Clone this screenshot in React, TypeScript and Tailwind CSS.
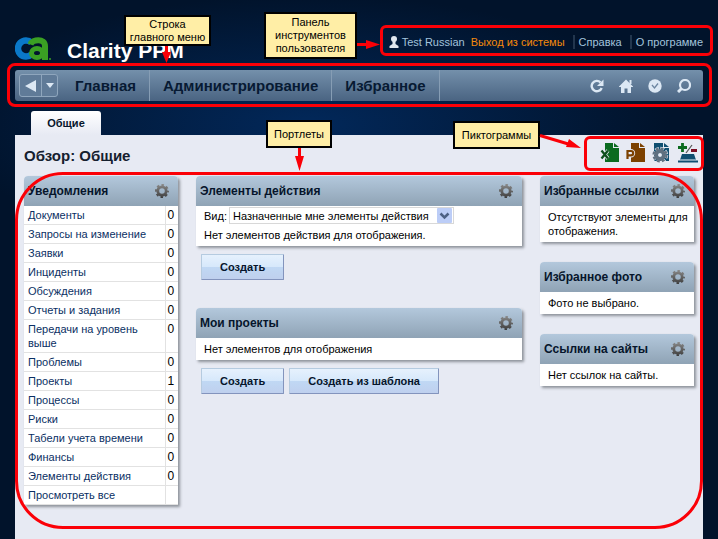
import React from 'react'
import type { ReactNode } from 'react'

const notices = [
  { label: 'Документы', count: '0' },
  { label: 'Запросы на изменение', count: '0' },
  { label: 'Заявки', count: '0' },
  { label: 'Инциденты', count: '0' },
  { label: 'Обсуждения', count: '0' },
  { label: 'Отчеты и задания', count: '0' },
  { label: 'Передачи на уровень выше', count: '0' },
  { label: 'Проблемы', count: '0' },
  { label: 'Проекты', count: '1' },
  { label: 'Процессы', count: '0' },
  { label: 'Риски', count: '0' },
  { label: 'Табели учета времени', count: '0' },
  { label: 'Финансы', count: '0' },
  { label: 'Элементы действия', count: '0' },
  { label: 'Просмотреть все', count: '' },
]

const menu = ['Главная', 'Администрирование', 'Избранное']

const Logo = () => (
  <svg width="38" height="24" viewBox="0 0 38 24" fill="none" role="img" aria-label="CA">
    <path d="M16.500 5.700A8 8 0 1016.500 17.300" stroke="#0a78c8" strokeWidth="6.500" />
    <ellipse cx="22" cy="16" rx="5.500" ry="4.500" stroke="#3aa023" strokeWidth="5" />
    <path d="M15.500 7.500C17.500 2 30 1 30 9v14" stroke="#3aa023" strokeWidth="6" />
    <circle cx="35" cy="22" r="1" fill="#3aa023" />
  </svg>
)

const Gear = () => (
  <svg width="14" height="14" viewBox="0 0 14 14" fill="none">
    <defs>
      <linearGradient id="gear" gradientUnits="userSpaceOnUse" x1="0" y1="0" x2="0" y2="14">
        <stop offset="0" stopColor="#8a8a8a" />
        <stop offset="1" stopColor="#3c3c3c" />
      </linearGradient>
    </defs>
    <circle cx="7" cy="7" r="4.2" stroke="url(#gear)" strokeWidth="2.8" />
    <circle cx="7" cy="7" r="6" stroke="url(#gear)" strokeWidth="2" strokeDasharray="2.5 2.212" strokeDashoffset="1.25" />
  </svg>
)

const ExcelIcon = () => (
  <svg width="20" height="20" viewBox="0 0 20 20" fill="none">
    <path d="M5 0h8v5h6v14H5z" fill="#0b6b1f" />
    <path d="M14 0l5 4h-5z" fill="#0b6b1f" />
    <path d="M1.500 7.500l6.500 8M8 7.500l-6.500 8" stroke="#e7eaf3" strokeWidth="3.600" />
    <path d="M1.500 7.500l6.500 8M8 7.500l-6.500 8" stroke="#0d4f1c" strokeWidth="2.300" />
  </svg>
)

const PowerPointIcon = () => (
  <svg width="20" height="20" viewBox="0 0 20 20" fill="none">
    <path d="M5 0h8v5h6v14H5z" fill="#7c4100" />
    <path d="M14 0l5 4h-5z" fill="#7c4100" />
    <path d="M1.500 16.500V8h3.500a2.200 2.200 0 010 4.400H1.500" stroke="#e7eaf3" strokeWidth="4" />
    <path d="M1.500 16V8h3.500a2.200 2.200 0 010 4.400H1.500" stroke="#7c4100" strokeWidth="2.200" />
  </svg>
)

const ConfigureIcon = () => (
  <svg width="20" height="20" viewBox="0 0 20 20" fill="none">
    <path d="M2 0h9v5h6v13H2z" fill="#0f4e70" />
    <path d="M12 0l5 4h-5z" fill="#0f4e70" />
    <circle cx="8" cy="12" r="6.500" stroke="#e7eaf3" strokeWidth="3.400" strokeDasharray="3.600 1.505" strokeDashoffset="0.400" />
    <circle cx="8" cy="12" r="4" stroke="#5f7080" strokeWidth="3.800" />
    <circle cx="8" cy="12" r="6.500" stroke="#5f7080" strokeWidth="2.200" strokeDasharray="2.800 2.305" />
    <circle cx="8" cy="12" r="2" fill="#e7eaf3" />
  </svg>
)

const PersonalizeIcon = () => (
  <svg width="20" height="20" viewBox="0 0 20 20" fill="none">
    <path d="M4.500 0v9M0 4.500h9" stroke="#0b6b1f" strokeWidth="2.800" />
    <path d="M8 10l6-8" stroke="#555" strokeWidth="1.200" />
    <path d="M13 7.500h6" stroke="#7c0d22" strokeWidth="3" />
    <path d="M4 11h12l2 6H2z" fill="#0f4e70" />
    <path d="M0 18.500h20" stroke="#0f4e70" strokeWidth="2" />
    <path d="M2 16.500h16" stroke="#7fa3b8" strokeWidth="1" />
  </svg>
)

const Callout = ({ className, children }: { className: string; children: ReactNode }) => (
  <div
    className={`absolute z-20 flex items-center justify-center border-2 border-black bg-[#ffeea6] text-center text-[11px] leading-[13px] whitespace-nowrap text-black ${className}`}
  >
    {children}
  </div>
)

const Frame = ({ className }: { className: string }) => (
  <div className={`pointer-events-none absolute z-10 border-3 border-[#fb0007] ${className}`} />
)

const Portlet = ({ title, children }: { title: string; children: ReactNode }) => (
  <section className="rounded-t-[4px] bg-white shadow-[2px_2px_3px_#8d9299]">
    <header className="flex h-[30px] items-center justify-between rounded-t-[4px] bg-gradient-to-b from-[#b3c8dc] to-[#8fa3b5] pr-[9px] pl-1">
      <h2 className="min-w-0 flex-1 overflow-hidden text-[12px] font-bold whitespace-nowrap text-[#06152b]">{title}</h2>
      <button type="button" aria-label="Настройка" className="ml-3 shrink-0">
        <Gear />
      </button>
    </header>
    {children}
  </section>
)

const Button = ({ children }: { children: ReactNode }) => (
  <button
    type="button"
    className="h-[26px] rounded-[1px] border border-t-[#b5cbe0] border-r-[#8394bd] border-b-[#8394bd] border-l-[#b5cbe0] bg-[linear-gradient(#e6f1fd,#d6e8fb_50%,#c0d8f4_50%,#bfd0ee)] px-[18px] text-[11px] font-bold text-[#06152b]"
  >
    {children}
  </button>
)

const App = () => {
  return (
    <div className="relative flex min-h-screen flex-col overflow-hidden bg-[#01132b] bg-[radial-gradient(ellipse_360px_130px_at_43%_125px,#02285a,#01132b)] px-[15px] font-['Liberation_Sans',Arial,sans-serif] text-[11px] leading-[14px]">
      <header className="flex h-[70px] items-start justify-between">
        <div className="flex items-start pt-[37px]">
          <Logo />
          <h1 className="ml-[14px] text-[21px] leading-[28px] font-bold text-white">Clarity PPM</h1>
        </div>
        <nav className="relative mt-[34px] flex h-[15px] items-center text-[#a3c3dc]">
          <Frame className="-top-[9px] -right-[10px] -bottom-[7px] -left-[9px] rounded-[6px]" />
          <svg width="10" height="12" viewBox="0 0 10 12" fill="#dfe6ee" className="mr-[3px]">
            <circle cx="5" cy="3" r="3" />
            <path d="M3.500 5h3v3l3 2v2h-9v-2l3-2z" />
          </svg>
          <span>Test Russian</span>
          <a href="#logout" className="ml-[6px] text-[#f58a0b]">Выход из системы</a>
          <a href="#help" className="ml-2 border-l-2 border-[#22364e] pl-1">Справка</a>
          <a href="#about" className="ml-2 border-l-2 border-[#22364e] pl-1">О программе</a>
        </nav>
      </header>

      <nav className="relative flex h-[31px] items-center rounded-[3px] bg-gradient-to-b from-[#7490ab] to-[#4a6482] text-[15px] font-bold text-[#071a33]">
        <Frame className="-top-[7px] -right-[9px] -bottom-[6px] -left-[8px] rounded-[8px]" />
        <div className="mr-1 ml-1 flex h-[23px] w-[39px] rounded-[3px] border border-[#8fa6bd] bg-[#607b98]">
          <button type="button" aria-label="Назад" className="flex flex-1 items-center justify-center border-r border-[#8fa6bd]">
            <svg width="12" height="12" viewBox="0 0 12 12" fill="#dce8f4"><path d="M0 6L11 0v12z" /></svg>
          </button>
          <button type="button" aria-label="История" className="flex w-[15px] items-center justify-center">
            <svg width="8" height="5" viewBox="0 0 8 5" fill="#dce8f4"><path d="M0 0h8L4 5z" /></svg>
          </button>
        </div>
        {menu.map((item) => (
          <a key={item} href="#menu" className="flex h-full items-center border-r border-[#869db4] px-[13px]">
            {item}
          </a>
        ))}
        <div className="mr-[12px] ml-auto flex items-center gap-[15px]">
          <button type="button" aria-label="Обновить">
            <svg width="14" height="14" viewBox="0 0 14 14" fill="none">
              <path d="M10.500 3.300A5.200 5.200 0 1011.700 9" stroke="#dce8f4" strokeWidth="2.400" />
              <path d="M13.500 0.500v6.500H7z" fill="#dce8f4" />
            </svg>
          </button>
          <button type="button" aria-label="Домой">
            <svg width="14" height="14" viewBox="0 0 14 14" fill="#dce8f4">
              <path d="M7 0.500l7 7V8h-2v6H8.500V9.500h-3V14H2V8H0v-.5z" />
              <path d="M10.500 1h2v4h-2z" />
            </svg>
          </button>
          <button type="button" aria-label="Избранное">
            <svg width="14" height="14" viewBox="0 0 14 14" fill="none">
              <circle cx="7" cy="7" r="6.700" fill="#dce8f4" />
              <path d="M4 6l2.500 3L10 4.500" stroke="#6c86a1" strokeWidth="1.300" />
            </svg>
          </button>
          <button type="button" aria-label="Поиск">
            <svg width="14" height="14" viewBox="0 0 14 14" fill="none" stroke="#dce8f4">
              <circle cx="8" cy="6" r="5" strokeWidth="2.200" />
              <path d="M4.800 9.200L1 13" strokeWidth="3" />
            </svg>
          </button>
        </div>
      </nav>

      <a
        href="#general"
        className="mt-[10px] ml-[16px] flex h-[24px] w-[70px] items-center justify-center rounded-t-[3px] bg-gradient-to-b from-white to-[#e7eaf3] text-[11px] font-bold text-[#06152b]"
      >
        Общие
      </a>

      <main className="relative flex-1 bg-[#e7eaf3] px-[9px] pb-[34px]">
        <Frame className="top-[37px] right-0 bottom-[10px] left-0 rounded-[48px]" />
        <div className="-mr-[4px] flex h-[41px] items-center justify-between">
          <h1 className="text-[15px] font-bold text-[#15202e]">Обзор: Общие</h1>
          <div className="relative flex items-center gap-[6px] pb-[6px]">
            <Frame className="-top-[7px] -right-[6px] -bottom-[2px] -left-[16px] rounded-[6px]" />
            <button type="button" aria-label="Экспорт в Excel"><ExcelIcon /></button>
            <button type="button" aria-label="Экспорт в PowerPoint"><PowerPointIcon /></button>
            <button type="button" aria-label="Настроить"><ConfigureIcon /></button>
            <button type="button" aria-label="Управление вкладками"><PersonalizeIcon /></button>
          </div>
        </div>

        <div className="grid grid-cols-[154px_1fr_154px] items-start gap-[18px] text-black">
          <Portlet title="Уведомления">
            <table className="w-full border-collapse">
              <tbody>
                {notices.map((row) => (
                  <tr key={row.label} className="border-b border-[#e2e2e2] align-top">
                    <td className="py-[2px] pr-2 pl-1">
                      <a href="#notice" className="text-[#0a2f63]">{row.label}</a>
                    </td>
                    <td className="w-[13px] border-l border-[#e2e2e2] py-[2px] pl-[2px] text-[12px]">{row.count}</td>
                  </tr>
                ))}
              </tbody>
            </table>
          </Portlet>

          <div>
            <Portlet title="Элементы действия">
              <div className="px-2 pt-px pb-[3px]">
                <div className="flex h-[17px] items-center">
                  <label htmlFor="view">Вид:</label>
                  <div className="relative ml-[2px]">
                    <select id="view" className="block h-[17px] w-[225px] appearance-none border border-[#d8d8d8] bg-white pl-[3px] text-[11px] leading-[14px]">
                      <option>Назначенные мне элементы действия</option>
                    </select>
                    <svg width="15" height="15" viewBox="0 0 15 15" className="pointer-events-none absolute top-px right-[2px]">
                      <rect width="15" height="15" rx="1" fill="#bccdf7" />
                      <path d="M3.500 5.500l4 4 4-4" fill="none" stroke="#4d6185" strokeWidth="2.500" />
                    </svg>
                  </div>
                </div>
                <p className="mt-1 pb-px">Нет элементов действия для отображения.</p>
              </div>
            </Portlet>
            <div className="mt-2 ml-[5px] flex gap-[5px]">
              <Button>Создать</Button>
            </div>

            <div className="mt-[28px]">
              <Portlet title="Мои проекты">
                <p className="px-2 py-1">Нет элементов для отображения</p>
              </Portlet>
            </div>
            <div className="mt-2 ml-[5px] flex gap-[5px]">
              <Button>Создать</Button>
              <Button>Создать из шаблона</Button>
            </div>
          </div>

          <div className="flex flex-col gap-5">
            <Portlet title="Избранные ссылки">
              <p className="py-1 pl-2 whitespace-nowrap">
                Отсутствуют элементы для
                <br />
                отображения.
              </p>
            </Portlet>
            <Portlet title="Избранное фото">
              <p className="px-2 py-1">Фото не выбрано.</p>
            </Portlet>
            <Portlet title="Ссылки на сайты">
              <p className="px-2 py-1">Нет ссылок на сайты.</p>
            </Portlet>
          </div>
        </div>
      </main>

      {/* Callouts and their arrows */}
      <Callout className="top-[15px] left-[124px] h-[31px] w-[87px]">
        Строка
        <br />
        главного меню
      </Callout>
      <Callout className="top-[12px] left-[264px] h-[47px] w-[93px]">
        Панель
        <br />
        инструментов
        <br />
        пользователя
      </Callout>
      <Callout className="top-[120px] left-[266px] h-[28px] w-[66px]">Портлеты</Callout>
      <Callout className="top-[121px] left-[453px] h-[28px] w-[87px]">Пиктограммы</Callout>
      <svg width="600" height="180" viewBox="0 0 600 180" className="pointer-events-none absolute top-0 left-0 z-20" fill="#fb0007" stroke="#fb0007">
        <path d="M166.500 46v8M357 44.500h12M299.500 148v11M540 135.500l30 9" strokeWidth="3" />
        <path d="M162 52h9l-4.500 11zM366 40v9l14-4.500zM295 156h9l-4.500 15zM569 139l-3 8 15 1z" stroke="none" />
      </svg>
    </div>
  )
}

export default App
